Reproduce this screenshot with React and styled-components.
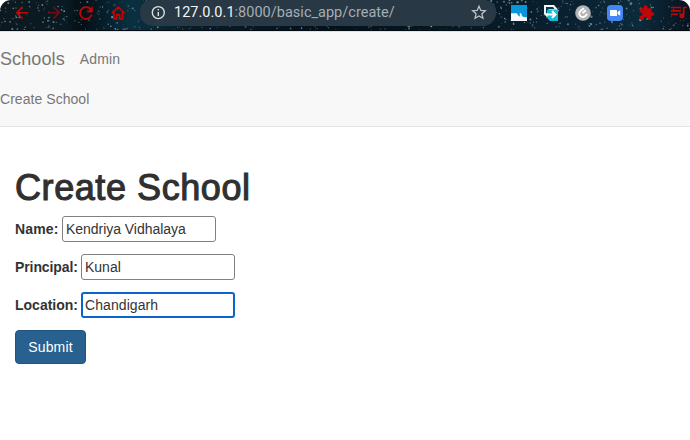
import React from "react";
import styled, { createGlobalStyle } from "styled-components";

const Global = createGlobalStyle`
  * { box-sizing: border-box; }
  html, body { margin: 0; background: #fff; }
  body {
    width: 690px; height: 440px; overflow: hidden;
    font-family: "Liberation Sans", Arial, sans-serif;
    font-size: 14px; line-height: 20px; color: #333;
  }
`;

const Toolbar = styled.header`
  position: relative;
  display: flex;
  height: 31px;
  overflow: hidden;
  border-radius: 11px 11px 0 0;
  background: linear-gradient(90deg, #0d1920 0, #0a1a23 65px, #050f16 82px, #07212e 108px, #0a3040 132px, #061c28 190px, #03111b 340px, #071a26 490px, #0a2131 570px, #0c2a3b 640px, #06131e 690px);
`;
const Sky = styled.svg`
  position: absolute;
  inset: 0;
`;
const Nav = styled.nav`
  position: relative;
  display: flex;
  width: 140px;
  height: 25px;
  padding-left: 14px;
  align-items: center;
  gap: 16px;
`;
const Icon = styled.svg`
  display: block;
  flex: none;
  width: 16px;
  height: 16px;
  opacity: ${(p) => (p.$dim ? 0.55 : 1)};
`;
const AddressBar = styled.div`
  position: relative;
  display: flex;
  align-items: center;
  width: 356px;
  height: 26px;
  padding: 0 9px 0 10px;
  border-radius: 11px 11px 13px 13px;
  background: #283844;
`;
const Url = styled.span`
  flex: 1;
  margin-left: 8px;
  font: 14.5px/24px Roboto, sans-serif;
  letter-spacing: 0.02px;
  color: #a5adb4;
`;
const Host = styled.span`
  color: #f3f5f6;
`;
const Extensions = styled.div`
  position: relative;
  display: flex;
  align-items: center;
  height: 25px;
  margin-left: 15px;
  gap: 16px;
`;

const Navbar = styled.div`
  height: 96px;
  border-top: 1px solid #dfe3e7;
  border-bottom: 1px solid #e4e4e4;
  background: #f8f8f8;
  color: #777;
`;
const NavRow = styled.div`
  display: flex;
  align-items: center;
  gap: 15px;
  height: ${(p) => p.$height}px;
`;
const Brand = styled.a`
  font-size: 18px;
  letter-spacing: 0.1px;
`;
const NavLink = styled.a`
  font-size: 14px;
  letter-spacing: ${(p) => p.$track || 0}px;
`;

const Content = styled.main`
  padding: 41px 15px 0;
`;
const Title = styled.h1`
  margin: 0 0 8px;
  font-size: 36px;
  line-height: 40px;
  font-weight: 400;
  letter-spacing: 0.57px;
  color: #303030;
  -webkit-text-stroke: 1.1px #303030;
`;
const Field = styled.label`
  display: flex;
  align-items: center;
  gap: 4px;
  height: 26px;
  margin-bottom: 12px;
`;
const Label = styled.span`
  width: ${(p) => p.$width}px;
  white-space: nowrap;
  font-weight: 700;
  letter-spacing: ${(p) => p.$track}px;
`;
const Input = styled.input`
  width: 154px;
  height: 26px;
  margin: 0;
  padding: 0 ${(p) => (p.$active ? 2 : 3)}px;
  border: ${(p) => (p.$active ? "2px solid #0b63ce" : "1px solid #808080")};
  border-radius: 3px;
  outline: none;
  background: #fff;
  color: #333;
  font: 14px "Liberation Sans", Arial, sans-serif;
  letter-spacing: ${(p) => p.$track || 0}px;
`;
const Submit = styled.button`
  display: block;
  width: 71px;
  height: 34px;
  padding: 0;
  border: 1px solid #205482;
  border-radius: 4px;
  background: #286090;
  color: #fff;
  font: 14px/20px "Liberation Sans", Arial, sans-serif;
  letter-spacing: 0.15px;
`;

// Deterministic star field for the browser theme.
const stars = (() => {
  let seed = 71;
  const next = () => {
    seed = (seed * 16807) % 2147483647;
    return seed / 2147483647;
  };
  return Array.from({ length: 700 }, () => ({
    x: next() * 690,
    y: next() * 31,
    r: 0.5 + next() * next() * 0.85,
    o: 0.15 + next() * 0.6,
  }));
})();

const RED = "#bd0808";

function BrowserBar() {
  return (
    <Toolbar>
      <Sky width="690" height="31" viewBox="0 0 690 31">
        {stars.map((s, i) => (
          <circle key={i} cx={s.x} cy={s.y} r={s.r} fill="#9fc0ce" opacity={s.o} />
        ))}
        <path d="M0 30.5h690" stroke="#020a11" />
      </Sky>
      <Nav>
        <Icon viewBox="2 2.3 20 20" fill={RED}>
          <path d="M20 11H7.83l5.59-5.59L12 4l-8 8 8 8 1.41-1.41L7.83 13H20z" />
        </Icon>
        <Icon $dim viewBox="2 2.3 20 20" fill={RED}>
          <path d="M12 4l-1.41 1.41L16.17 11H4v2h12.17l-5.58 5.59L12 20l8-8z" />
        </Icon>
        <Icon viewBox="2.5 2.5 19 19" fill={RED}>
          <path d="M17.65 6.35A8 8 0 1 0 19.73 14h-2.08A6 6 0 1 1 16.22 7.78L13 11h7V4z" stroke={RED} strokeWidth=".3" />
        </Icon>
        <Icon viewBox="0 0 16 16" fill="none" stroke={RED} strokeWidth="1.6">
          <path d="M2 8.2 8.3 2l6.3 6.2M4 6.9v7h2.8v-4h3v4h2.8v-7" />
        </Icon>
      </Nav>
      <AddressBar>
        <Icon viewBox="0 0 16 16" fill="none" stroke="#dce0e3" strokeWidth="1.4">
          <circle cx="8.3" cy="7.6" r="6" />
          <path d="M8.3 7v4M8.3 4.1v1.5" />
        </Icon>
        <Url><Host>127.0.0.1</Host>:8000/basic_app/create/</Url>
        <Icon viewBox="0 0 16 16" fill="none" stroke="#c0c6ca" strokeWidth="1.25">
          <path d="m8 1.2 1.8 4.2 4.6.4-3.5 3 1.1 4.5L8 10.9l-4 2.4 1.1-4.5-3.5-3 4.6-.4z" />
        </Icon>
      </AddressBar>
      <Extensions>
        <Icon viewBox="0 0 16 16">
          <path fill="#0796dc" d="M0 0h16v16H0z" />
          <path fill="#f4f9fd" d="M0 8.3h5.5c1 0 1.2 2.7 3.3 3.2V8.3h1.4c.4 3 2 4 4 4H16V16H0z" />
        </Icon>
        <Icon viewBox="0 0 16 16">
          <path d="M1 0h10l3.5 4v8H4L1 9z" fill="#edfaff" />
          <path d="M3 2h7l1.5 2H6L4.5 5.5V9L3 7.5z" fill="#07364c" />
          <path d="M4.5 4.5h9l1.5 1.5v10H7l-2.5-2.5z" fill="#10bdd5" />
          <path d="M4 9.5h8M9 6l3.5 3.5L9 13" fill="none" stroke="#fff" strokeWidth="2" />
        </Icon>
        <Icon viewBox="0 0 16 16">
          <circle cx="8" cy="8" r="7.8" fill="#b4b4b4" />
          <path d="M9 3.3 5.4 6.1A3.4 3.4 0 0 0 10 11.2l2.2-2.3M10.8 5.3 7.5 8.2" fill="none" stroke="#fff" strokeWidth="1.9" />
        </Icon>
        <Icon viewBox="0 0 16 16">
          <rect width="16" height="16" rx="4" fill="#4387f5" />
          <path d="M3 5h6q1 0 1 1v5H4q-1 0-1-1zM10.6 7l2.6-1.8v5.6L10.6 9z" fill="#fff" />
        </Icon>
        <Icon viewBox="1 .5 23 23" fill={RED}>
          <path d="M20.5 11H19V7c0-1.1-.9-2-2-2h-4V3.5C13 2.12 11.88 1 10.5 1S8 2.12 8 3.5V5H4c-1.1 0-1.99.9-1.99 2v3.8H3.5c1.49 0 2.7 1.21 2.7 2.7s-1.21 2.7-2.7 2.7H2V20c0 1.1.9 2 2 2h3.8v-1.5c0-1.49 1.21-2.7 2.7-2.7 1.49 0 2.7 1.21 2.7 2.7V22H17c1.1 0 2-.9 2-2v-4h1.5c1.38 0 2.5-1.12 2.5-2.5S21.88 11 20.5 11z" />
        </Icon>
        <Icon viewBox="3 4 19 19" fill={RED}>
          <path d="M15 6H3v2h12V6zm0 4H3v2h12v-2zM3 16h8v-2H3v2zM17 6v8.18c-.31-.11-.65-.18-1-.18-1.66 0-3 1.34-3 3s1.34 3 3 3 3-1.34 3-3V8h3V6h-5z" />
        </Icon>
      </Extensions>
    </Toolbar>
  );
}

export default function App() {
  return (
    <>
      <Global />
      <BrowserBar />
      <Navbar>
        <NavRow $height={54}>
          <Brand>Schools</Brand>
          <NavLink $track={0.15}>Admin</NavLink>
        </NavRow>
        <NavRow $height={26}>
          <NavLink $track={0.05}>Create School</NavLink>
        </NavRow>
      </Navbar>
      <Content>
        <Title>Create School</Title>
        <Field>
          <Label $width={43} $track={0.15}>Name:</Label>
          <Input defaultValue="Kendriya Vidhalaya" $track={-0.04} />
        </Field>
        <Field>
          <Label $width={62} $track={-0.1}>Principal:</Label>
          <Input defaultValue="Kunal" />
        </Field>
        <Field>
          <Label $width={62} $track={0}>Location:</Label>
          <Input defaultValue="Chandigarh" $active $track={0.08} />
        </Field>
        <Submit>Submit</Submit>
      </Content>
    </>
  );
}
